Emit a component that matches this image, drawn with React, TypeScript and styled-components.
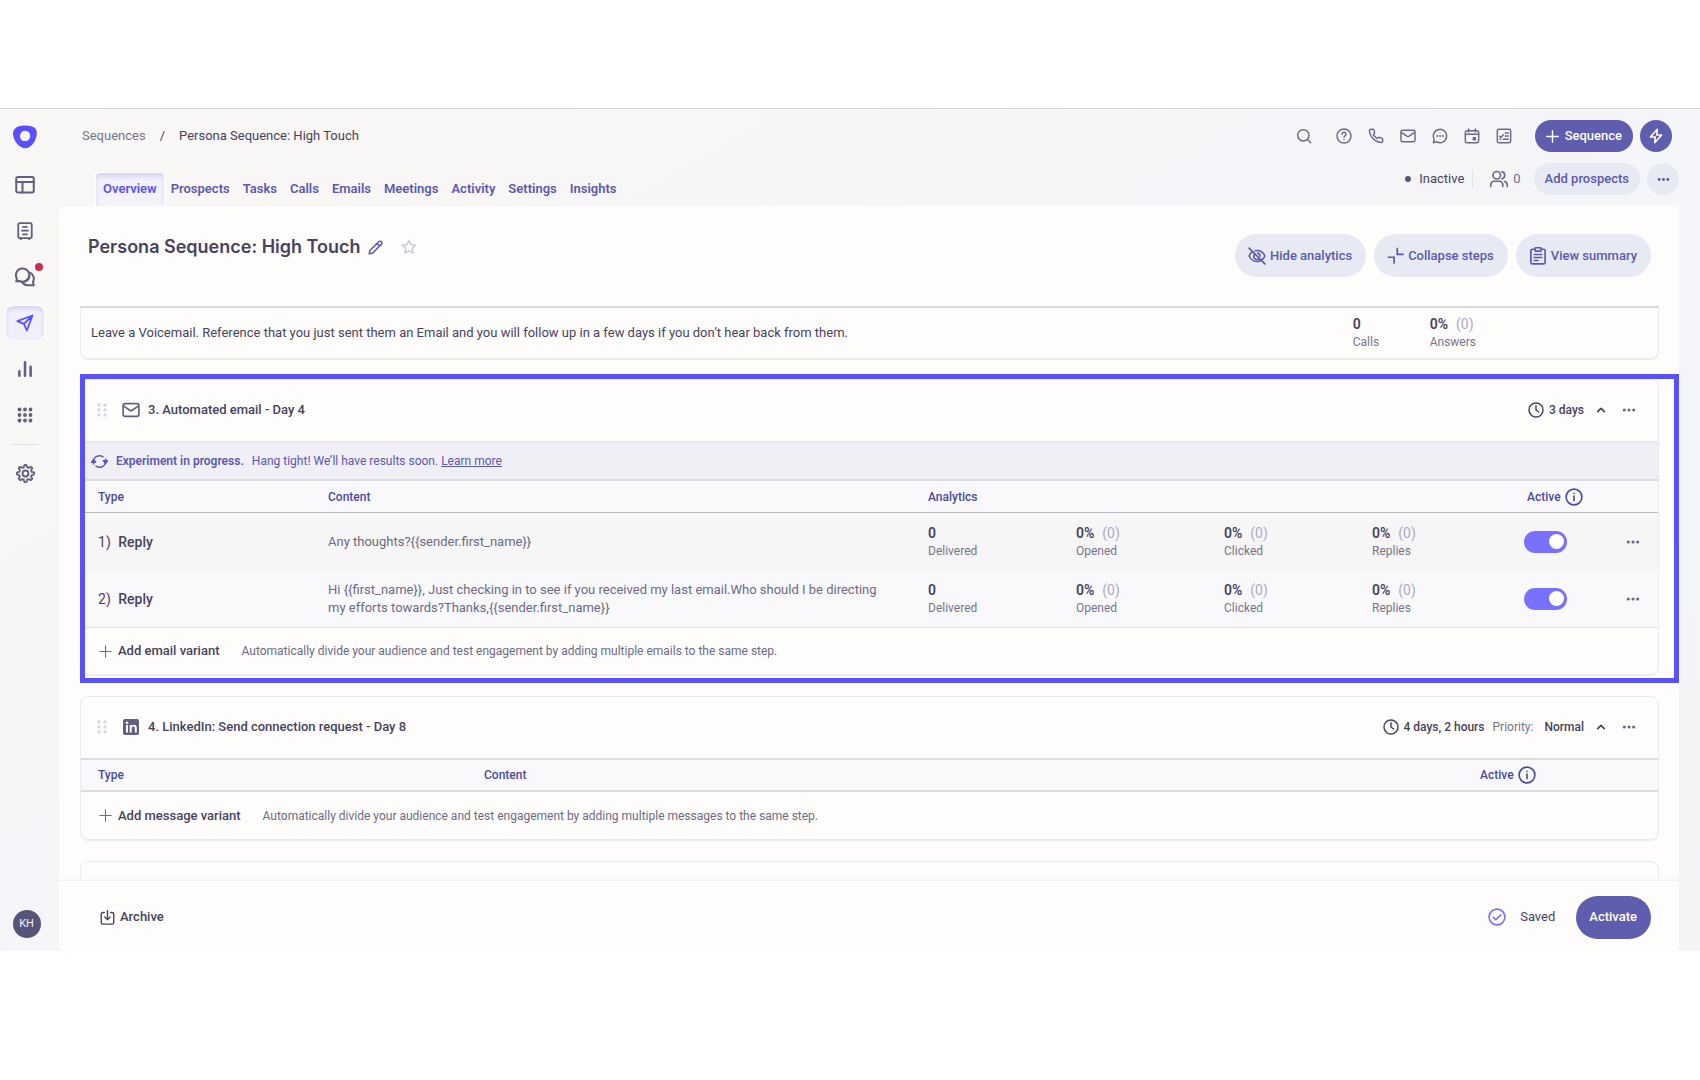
import React from 'react';
import styled, { createGlobalStyle, css } from 'styled-components';

const GlobalStyle = createGlobalStyle`
  *, *::before, *::after { box-sizing: border-box; }
  body {
    margin: 0;
    background: #fff;
    color: #47435f;
    font-family: Roboto, "Liberation Sans", sans-serif;
    font-size: 13px;
    line-height: 18px;
  }
  h1, h2, p, ul, ol { margin: 0; padding: 0; list-style: none; }
  button { font: inherit; color: inherit; border: 0; background: none; padding: 0; cursor: pointer; }
`;

/* ---------- icons ---------- */

const Svg = styled.svg.attrs({ viewBox: '0 0 24 24', 'aria-hidden': true })<{ $size?: number; $stroke?: number }>`
  display: block;
  flex: none;
  width: ${(p) => p.$size ?? 18}px;
  height: ${(p) => p.$size ?? 18}px;
  fill: none;
  stroke: currentColor;
  stroke-width: ${(p) => p.$stroke ?? 2};
  stroke-linecap: round;
  stroke-linejoin: round;
`;

/* Outline of a cog with eight rounded teeth. */
const cogPath = `M${Array.from({ length: 96 }, (_, i) => {
  const a = (i / 96) * Math.PI * 2;
  const r = 9.4 + 1.5 * Math.tanh(2 * Math.cos(8 * a));
  return `${(12 + r * Math.cos(a)).toFixed(2)} ${(12 + r * Math.sin(a)).toFixed(2)}`;
}).join('L')}Z`;

const shapes: Record<string, React.ReactNode> = {
  search: <><circle cx="11" cy="11" r="8.5" /><path d="m17.2 17.2 4.8 4.8" /></>,
  help: <><circle cx="12" cy="12" r="10.5" /><path d="M9 9.2a3 3 0 0 1 6 .3c0 2-3 2.4-3 4.3" /><path d="M12 17.2v.1" /></>,
  phone: <path d="M22 16.9v3a2 2 0 0 1-2.2 2 19.8 19.8 0 0 1-8.6-3.1 19.5 19.5 0 0 1-6-6A19.8 19.8 0 0 1 2.1 4.2 2 2 0 0 1 4.1 2h3a2 2 0 0 1 2 1.7c.1 1 .4 1.9.7 2.8a2 2 0 0 1-.5 2.1L8.1 9.9a16 16 0 0 0 6 6l1.3-1.3a2 2 0 0 1 2.1-.4c.9.3 1.8.6 2.8.7a2 2 0 0 1 1.7 2z" />,
  mail: <><rect x="1.5" y="3.5" width="21" height="17" rx="2.5" /><path d="m2 6.5 8.4 5.8a3 3 0 0 0 3.2 0L22 6.5" /></>,
  chat: <><path d="M2 22l1.3-5A10 10 0 1 1 7 20.7z" /><path d="M7.8 12h.1M12 12h.1M16.2 12h.1" strokeWidth="2.8" /></>,
  calendar: <><rect x="2" y="4" width="20" height="18" rx="2.5" /><path d="M7 1.5V6M17 1.5V6M2 9.5h20" /><path d="M14 14.5h3v3h-3z" fill="currentColor" /></>,
  checklist: <><rect x="2" y="2" width="20" height="20" rx="2.5" /><path d="m5.5 12.5 1.800 1.800 3.700-4M14 7.500h4.500M14 12h4.500M11 17h7.500M6 17h1" /></>,
  plus: <path d="M12 1.5v21M1.5 12h21" />,
  bolt: <path d="M14 2 3.5 13.5H11L10 22l10.5-11.5H13z" />,
  users: <><circle cx="9" cy="7" r="5" /><path d="M1 22v-2.500a4.500 4.500 0 0 1 4.500-4.500h7a4.500 4.500 0 0 1 4.500 4.500V22M16 2.200a5 5 0 0 1 0 9.600M23 22v-2.500a4.500 4.500 0 0 0-3.400-4.300" /></>,
  dots: <><circle cx="4" cy="12" r="2.7" fill="currentColor" /><circle cx="12" cy="12" r="2.7" fill="currentColor" /><circle cx="20" cy="12" r="2.7" fill="currentColor" /></>,
  pencil: <path d="M17 2.800a2.900 2.900 0 0 1 4.200 4.200L7.500 20.700 1.800 22.200l1.500-5.700zM14.500 5.300l4.200 4.200" />,
  star: <path d="m12 2 3 6.400 7 .9-5.200 4.800 1.400 6.900L12 17.600 5.800 21l1.400-6.900L2 9.300l7-.9z" />,
  eyeOff: <><path d="M1.500 1.500l21 21M9.500 5c6-1.200 10.700 2 13 7-1 2.200-2.300 3.800-4 5M6 6.200C4 7.600 2.500 9.600 1.500 12c2.800 6.200 8.700 8.500 14.500 6.500" /><path d="M9.200 9.600a4 4 0 1 0 5.800 5.400M13 8.200a4 4 0 0 1 3 4" /></>,
  collapse: <path d="M1 14.500h9V23.500M14.500 1v9.500H23.500" strokeLinecap="butt" strokeLinejoin="miter" />,
  clipboard: <><path d="M7.500 3H4.500A2 2 0 0 0 2.500 5v15.500a2 2 0 0 0 2 2h15a2 2 0 0 0 2-2V5a2 2 0 0 0-2-2h-3" /><rect x="8" y="1" width="8" height="4.500" rx="1" /><path d="M7 10h10M7 14h10M7 18h5" /></>,
  clock: <><circle cx="12" cy="12" r="10.500" /><path d="M12 5.500V12l4 3" /></>,
  chevronUp: <path d="m4 16 8-8 8 8" />,
  refresh: <><path d="M3.500 15.500V12.500A8.500 8.500 0 0 1 17 5.500M20.500 8.500v3A8.500 8.500 0 0 1 7 18.500" /><path d="m.8 13 2.700-4 3 4zM17.500 11l3 4 2.700-4z" fill="currentColor" /></>,
  info: <><circle cx="12" cy="12" r="10.500" /><path d="M12 10.800v6M12 7.200v.1" /></>,
  archive: <><path d="M7 4H4.500A2.500 2.500 0 0 0 2 6.500V20a2.500 2.500 0 0 0 2.500 2.500h15A2.500 2.500 0 0 0 22 20V6.500A2.500 2.500 0 0 0 19.500 4H17M12 1v14M7.500 11l4.500 4.500 4.500-4.500" /></>,
  checkCircle: <><circle cx="12" cy="12" r="10.500" /><path d="m7 12.300 3.500 3.400 6.500-6.500" /></>,
  layout: <><rect x="1.500" y="2.500" width="21" height="18.500" rx="2" /><path d="M1.500 8.500h21M9 8.500V21" /></>,
  ledger: <><rect x="3" y="1.500" width="18" height="20" rx="2" /><path d="M9.500 6.500h5M8 11.500h8M9.500 16.500h5M6.500 22v1M17.500 22v1" /></>,
  bubbles: <><path d="M1.500 17.200l.8-3.400A8 8 0 1 1 5.500 16.800z" /><path d="M18 6.800a8 8 0 0 1 3.600 11l.9 4.200H14.500a8 8 0 0 1-6.300-4.200" /><path d="M17.300 9.500c.4 4-2 7-5.300 7.600" /></>,
  send: <path d="M22 2 1.800 9.500l8.700 3.700L14.500 22zM22 2 10.500 13.200" />,
  bars: <path d="M4.500 15v6M12 3v18M19.500 9v12" strokeWidth="3.400" />,
  gear: <><circle cx="12" cy="12" r="3.700" /><path d={cogPath} /></>,
};

function Icon({ name, size, stroke }: { name: keyof typeof shapes; size?: number; stroke?: number }) {
  return <Svg $size={size} $stroke={stroke}>{shapes[name]}</Svg>;
}

const dotGrid = (cols: number[], rows: number[], r: number) =>
  rows.flatMap((y) => cols.map((x) => <circle key={`${x}-${y}`} cx={x} cy={y} r={r} />));

const DotSvg = styled.svg<{ $w: number; $h: number }>`
  display: block;
  flex: none;
  width: ${(p) => p.$w}px;
  height: ${(p) => p.$h}px;
  fill: currentColor;
`;

const Grip = () => (
  <DotSvg $w={10} $h={14} viewBox="0 0 10 14" aria-hidden>{dotGrid([2, 8], [2, 7, 12], 1.7)}</DotSvg>
);

const AppsGrid = () => (
  <DotSvg $w={16} $h={16} viewBox="0 0 16 16" aria-hidden>{dotGrid([2.5, 8, 13.5], [2.5, 8, 13.5], 1.9)}</DotSvg>
);

const Logo = () => (
  <DotSvg $w={24} $h={24} viewBox="0 0 24 24" aria-hidden>
    <path
      fillRule="evenodd"
      d="M0 8.500C0 4 3.500 1.200 9 .7c5-.5 9.500 0 12.500 2C24 4.700 24.300 8.500 23.300 12c-1.500 5.500-5.300 10.500-10.300 11.300C7.500 24 0 16.500 0 8.500zm7 2.100c-.3 3 1.800 5.300 4.600 5.500 3 .2 5.500-2.300 5.600-5.200.1-3-2-5-4.900-5.100C9.500 5.700 7.300 7.800 7 10.600z"
    />
  </DotSvg>
);

const LinkedIn = () => (
  <DotSvg $w={18} $h={18} viewBox="0 0 18 18" aria-hidden>
    <rect x="1" y="1" width="16" height="16" rx="2" />
    <g fill="#fefdfc">
      <circle cx="5" cy="4.800" r="1.300" />
      <rect x="4" y="7" width="2" height="7.500" />
      <path d="M7.700 7h1.900v1c.5-.8 1.300-1.200 2.300-1.200 2 0 2.900 1.200 2.900 3.300v4.400h-2v-4c0-1.200-.5-1.900-1.500-1.900s-1.600.8-1.600 2v3.900h-2z" />
    </g>
  </DotSvg>
);

/* ---------- shell ---------- */

const Page = styled.div`
  height: 100vh;
  min-height: 720px;
  padding: 108px 0 129px;
`;

const Shell = styled.div`
  display: grid;
  grid-template-columns: 59px minmax(0, 1fr);
  height: 100%;
  border-top: 1px solid #d8d7db;
  background: linear-gradient(150deg, #f9f8f6 0%, #f8f7f6 20%, #f6f4f8 42%, #f5f6f9 55%, #f4f4f7 100%);
`;

const Sidebar = styled.nav`
  display: flex;
  flex-direction: column;
  align-items: center;
  padding: 16px 9px 13px 0;
  color: #625f7f;
`;

const LogoLink = styled.a`
  display: block;
  color: #5951ff;
  margin-bottom: 13px;
`;

const SideLink = styled.a<{ $active?: boolean }>`
  position: relative;
  display: flex;
  align-items: center;
  justify-content: center;
  width: 40px;
  height: 36px;
  margin: 5px 0;
  border-radius: 8px;
  color: inherit;
  ${(p) =>
    p.$active &&
    css`
      color: #5951ff;
      background: #f0effc;
      border: 1px solid #fff;
      box-shadow: inset 0 3px 4px #d6d4ee;
    `}
`;

const Badge = styled.span`
  position: absolute;
  top: 4px;
  right: 2px;
  width: 8px;
  height: 8px;
  border-radius: 50%;
  background: #cb2c4d;
`;

const SideRule = styled.hr`
  width: 28px;
  margin: 6px 0 5px;
  border: 0;
  border-top: 1px solid #e3e2e8;
`;

const Avatar = styled.button`
  width: 28px;
  height: 28px;
  margin: auto 0 0 3px;
  border-radius: 50%;
  background: #57547a;
  color: #f3f2f8;
  font-size: 11px;
`;

const Main = styled.main`
  display: flex;
  flex-direction: column;
  min-width: 0;
  min-height: 0;
  padding-right: 21px;
`;

const Header = styled.header`
  display: grid;
  grid-template-columns: minmax(0, 1fr) auto;
  height: 97px;
  flex: none;
`;

const HeaderLeft = styled.div`
  display: flex;
  flex-direction: column;
  justify-content: space-between;
  padding: 18px 0 0 23px;
`;

const HeaderRight = styled.div`
  display: flex;
  flex-direction: column;
  gap: 11px;
  padding-top: 11px;
`;

const Crumbs = styled.ol`
  display: flex;
  gap: 14px;
  color: #47435f;
`;

const CrumbLink = styled.a`
  color: #77748d;
  text-decoration: none;
`;

const Tabs = styled.nav`
  display: flex;
  padding-left: 13px;
`;

const Tab = styled.a<{ $active?: boolean }>`
  padding: 8px 7px 8px 6px;
  height: 34px;
  font-weight: 600;
  color: #5b59b0;
  text-decoration: none;
  ${(p) =>
    p.$active &&
    css`
      padding: 7px;
      color: #5951ff;
      background: #f3f2fd;
      border: 1px solid #fff;
      border-bottom: 0;
      border-radius: 4px 4px 0 0;
      box-shadow: inset 0 4px 4px #d9d7f0;
    `}
`;

const ToolRow = styled.div<{ $inset?: boolean }>`
  display: flex;
  align-items: center;
  justify-content: flex-end;
  gap: 7px;
  padding-right: ${(p) => (p.$inset ? 7 : 0)}px;
`;

const Tools = styled.div`
  display: flex;
  align-items: center;
  gap: 16px;
  margin-right: 16px;
  color: #6d6a86;
  & > :first-child { margin-right: 8px; }
`;

const IconButton = styled.button<{ $muted?: boolean }>`
  display: flex;
  align-items: center;
  justify-content: center;
  color: ${(p) => (p.$muted ? '#6d6a86' : 'inherit')};
`;

const Pill = styled.button<{ $solid?: boolean; $large?: boolean }>`
  display: flex;
  align-items: center;
  justify-content: center;
  gap: 6px;
  height: ${(p) => (p.$large ? 43 : 32)}px;
  padding: ${(p) => (p.$large ? '0 14px 0 13px' : '0 11px')};
  border-radius: 22px;
  font-weight: 500;
  white-space: nowrap;
  color: ${(p) => (p.$solid ? '#fff' : '#5b59b0')};
  background: ${(p) => (p.$solid ? '#5e5dae' : '#e7eaf3')};
`;

const RoundButton = styled(Pill)`
  width: 32px;
  padding: 0;
`;

const Status = styled.span`
  display: flex;
  align-items: center;
  gap: 8px;
  padding-right: 8px;
  border-right: 1px solid #e3e2e8;
  &::before {
    content: "";
    width: 6px;
    height: 6px;
    border-radius: 50%;
    background: #57547a;
  }
`;

const PeopleCount = styled.span`
  display: flex;
  align-items: center;
  gap: 5px;
  margin: 0 6px 0 10px;
  color: #6d6a86;
`;

/* ---------- panel ---------- */

const Panel = styled.section`
  display: flex;
  flex-direction: column;
  flex: 1;
  min-height: 0;
  border-radius: 6px;
  background: #fefdfc;
`;

const TitleBar = styled.div`
  display: flex;
  justify-content: space-between;
  align-items: flex-start;
  flex: none;
  height: 100px;
  padding: 28px 28px 0 29px;
`;

const TitleGroup = styled.div`
  display: flex;
  align-items: center;
  height: 26px;
  gap: 7px;
`;

const Title = styled.h1`
  font: 600 18px/24px Inter, Roboto, sans-serif;
  color: #47435f;
`;

const EditButton = styled(IconButton)`
  color: #5b59b0;
`;

const StarButton = styled(IconButton)`
  margin-left: 11px;
  color: #cfcee0;
`;

const Actions = styled.div`
  display: flex;
  gap: 8px;
  & > button { gap: 4px; }
`;

const Steps = styled.div`
  flex: 1;
  min-height: 0;
  overflow: hidden auto;
  scrollbar-width: none;
  padding: 0 20px 0 21px;
`;

const Card = styled.article`
  border: 1px solid #ebeaef;
  border-radius: 8px;
  box-shadow: 0 1px 1px #ecebef;
  margin-bottom: 21px;
  overflow: hidden;
`;

const NoteCard = styled(Card)`
  display: flex;
  justify-content: space-between;
  align-items: center;
  height: 53px;
  padding: 0 182px 0 10px;
  border-top: 2px solid #d9d8dc;
  border-radius: 0 0 8px 8px;
  margin-bottom: 20px;
`;

const StatList = styled.div`
  display: flex;
`;

const StatBox = styled.div<{ $w?: number }>`
  width: ${(p) => (p.$w ? `${p.$w}px` : 'auto')};
`;

const StatValue = styled.div`
  font-size: 14px;
  font-weight: 600;
  & > span {
    margin-left: 8px;
    font-weight: 400;
    color: #aeabc6;
  }
`;

const StatLabel = styled.div`
  font-size: 12px;
  color: #77748d;
`;

const Highlighted = styled.div`
  position: relative;
  &::after {
    content: "";
    position: absolute;
    inset: -5px -20px -8px 0;
    border: 5px solid #5951ff;
    pointer-events: none;
  }
`;

const StepHead = styled.header`
  display: flex;
  align-items: center;
  height: 61px;
  padding: 0 22px 1px 16px;
`;

const GripHandle = styled.button`
  color: #d8d7e5;
  margin-right: 15px;
`;

const StepIcon = styled.span`
  color: #625f7f;
  margin-right: 8px;
`;

const StepTitle = styled.h2`
  flex: 1;
  font-size: 13px;
  font-weight: 500;
  line-height: 18px;
`;

const StepMeta = styled.div`
  display: flex;
  align-items: center;
  font-size: 12px;
  font-weight: 500;
`;

const Delay = styled.span`
  display: flex;
  align-items: center;
  gap: 5px;
`;

const Priority = styled.span`
  margin-left: 8px;
  & > span {
    margin-right: 11px;
    font-weight: 400;
    color: #77748d;
  }
`;

const ToggleStep = styled(IconButton)`
  width: 16px;
  margin: 0 13px 0 9px;
`;

const Banner = styled.div`
  display: flex;
  align-items: center;
  gap: 8px;
  height: 38px;
  padding: 0 10px;
  border-top: 2px solid #e9e8ec;
  background: #f0eff6;
  color: #5b59b0;
  font-size: 12px;
  & > strong { font-weight: 600; }
`;

const BannerLink = styled.a`
  color: inherit;
`;

const VariantTable = styled.table`
  width: 100%;
  table-layout: fixed;
  border-spacing: 0;
  text-align: left;
`;

const Col = styled.col<{ $w?: number }>`
  width: ${(p) => (p.$w ? `${p.$w}px` : 'auto')};
`;

const Th = styled.th<{ $first?: boolean; $rule?: string }>`
  height: 34px;
  padding: 0 0 0 ${(p) => (p.$first ? 17 : 0)}px;
  border-top: 2px solid #dddcdf;
  border-bottom: ${(p) => p.$rule ?? '2px solid #dddcdf'};
  background: #f9f9fc;
  color: #4c4a9c;
  font-size: 12px;
  font-weight: 500;
`;

const ActiveLabel = styled.span`
  display: flex;
  align-items: center;
  gap: 4px;
  padding-left: 7px;
`;

const Row = styled.tr<{ $shade?: boolean }>`
  background: ${(p) => (p.$shade ? '#f6f6f6' : '#f9f9fc')};
`;

const Td = styled.td`
  height: 57px;
  padding: 0;
`;

const TypeCell = styled(Td)`
  padding-left: 17px;
  font-size: 14px;
  & > strong {
    margin-left: 4px;
    font-weight: 500;
  }
`;

const ContentCell = styled(Td)`
  padding-right: 32px;
  color: #6d6a86;
`;

const SwitchCell = styled(Td)`
  padding-left: 4px;
`;

const Switch = styled.input.attrs({ type: 'checkbox', role: 'switch' })`
  appearance: none;
  display: flex;
  align-items: center;
  width: 43px;
  height: 22px;
  margin: 0;
  padding: 3px;
  border-radius: 11px;
  background: #c9c8d8;
  cursor: pointer;
  &::before {
    content: "";
    width: 15px;
    height: 15px;
    border-radius: 50%;
    background: #fff;
  }
  &:checked {
    justify-content: flex-end;
    background: #7871ff;
  }
`;

const RowMenu = styled(IconButton)`
  margin-left: 16px;
`;

const StepFoot = styled.footer<{ $rule?: boolean }>`
  display: flex;
  align-items: center;
  gap: 22px;
  height: 47px;
  padding-left: 18px;
  border-top: ${(p) => (p.$rule ? '1px solid #e3e2e6' : '0')};
  color: #6d6a86;
  font-size: 12px;
`;

const AddButton = styled.button`
  display: flex;
  align-items: center;
  gap: 6px;
  font-size: 13px;
  font-weight: 500;
  & > span { color: #47435f; }
`;

const BottomBar = styled.footer`
  display: flex;
  align-items: center;
  flex: none;
  height: 71px;
  padding: 2px 28px 0 41px;
  border-top: 1px solid #f3f2f3;
  box-shadow: 0 -2px 3px #f8f7f7;
`;

const ArchiveButton = styled.button`
  display: flex;
  align-items: center;
  gap: 5px;
  margin-right: auto;
  font-weight: 500;
`;

const Saved = styled.span`
  display: flex;
  align-items: center;
  gap: 14px;
  margin-right: 21px;
  & > svg { color: #7871ff; }
`;

/* ---------- data ---------- */

const tabs = ['Overview', 'Prospects', 'Tasks', 'Calls', 'Emails', 'Meetings', 'Activity', 'Settings', 'Insights'];

const tools: [string, string][] = [
  ['search', 'Search'], ['help', 'Help'], ['phone', 'Call'], ['mail', 'Email'],
  ['chat', 'Messages'], ['calendar', 'Calendar'], ['checklist', 'Tasks'],
];

const variants = [
  'Any thoughts?{{sender.first_name}}',
  'Hi {{first_name}}, Just checking in to see if you received my last email.Who should I be directing my efforts towards?Thanks,{{sender.first_name}}',
];

const metrics: [string, string, string?][] = [
  ['Delivered', '0'], ['Opened', '0%', '(0)'], ['Clicked', '0%', '(0)'], ['Replies', '0%', '(0)'],
];

function Stat({ label, value, count, width }: { label: string; value: string; count?: string; width?: number }) {
  return (
    <StatBox $w={width}>
      <StatValue>{value}{count && <span>{count}</span>}</StatValue>
      <StatLabel>{label}</StatLabel>
    </StatBox>
  );
}

function StepHeader({ icon, title, delay, priority }: { icon: React.ReactNode; title: string; delay: string; priority?: string }) {
  return (
    <StepHead>
      <GripHandle aria-label="Reorder step"><Grip /></GripHandle>
      <StepIcon>{icon}</StepIcon>
      <StepTitle>{title}</StepTitle>
      <StepMeta>
        <Delay><Icon name="clock" size={16} stroke={2.2} />{delay}</Delay>
        {priority && <Priority><span>Priority:</span>{priority}</Priority>}
        <ToggleStep aria-label="Collapse step"><Icon name="chevronUp" size={10} stroke={4} /></ToggleStep>
        <IconButton $muted aria-label="Step options"><Icon name="dots" size={14} stroke={0} /></IconButton>
      </StepMeta>
    </StepHead>
  );
}

const ActiveHeading = () => (
  <ActiveLabel>Active <Icon name="info" size={18} stroke={2.2} /></ActiveLabel>
);

const rail: [string, string][] = [['layout', 'Home'], ['ledger', 'Accounts'], ['bubbles', 'Inbox'], ['send', 'Sequences'], ['bars', 'Reports']];

export default function App() {
  return (
    <Page>
      <GlobalStyle />
      <Shell>
        <Sidebar aria-label="Main">
          <LogoLink href="#" aria-label="Home"><Logo /></LogoLink>
          {rail.map(([icon, label]) => (
            <SideLink key={icon} href="#" aria-label={label} $active={icon === 'send'}>
              <Icon name={icon} size={icon === 'layout' || icon === 'bubbles' ? 20 : 18} stroke={2.4} />
              {icon === 'bubbles' && <Badge />}
            </SideLink>
          ))}
          <SideLink href="#" aria-label="Apps"><AppsGrid /></SideLink>
          <SideRule />
          <SideLink href="#" aria-label="Settings"><Icon name="gear" size={19} stroke={2.4} /></SideLink>
          <Avatar aria-label="Account">KH</Avatar>
        </Sidebar>

        <Main>
          <Header>
            <HeaderLeft>
              <Crumbs>
                <li><CrumbLink href="#">Sequences</CrumbLink></li>
                <li>/</li>
                <li>Persona Sequence: High Touch</li>
              </Crumbs>
              <Tabs aria-label="Sequence">
                {tabs.map((t, i) => <Tab key={t} href="#" $active={i === 0}>{t}</Tab>)}
              </Tabs>
            </HeaderLeft>
            <HeaderRight>
              <ToolRow $inset>
                <Tools>
                  {tools.map(([icon, label]) => (
                    <IconButton key={icon} aria-label={label}><Icon name={icon} size={16} stroke={2.2} /></IconButton>
                  ))}
                </Tools>
                <Pill $solid><Icon name="plus" size={13} stroke={2.6} />Sequence</Pill>
                <RoundButton $solid aria-label="Quick actions"><Icon name="bolt" size={16} stroke={2.4} /></RoundButton>
              </ToolRow>
              <ToolRow>
                <Status>Inactive</Status>
                <PeopleCount><Icon name="users" size={18} stroke={2.2} />0</PeopleCount>
                <Pill>Add prospects</Pill>
                <RoundButton aria-label="More"><Icon name="dots" size={13} stroke={0} /></RoundButton>
              </ToolRow>
            </HeaderRight>
          </Header>

          <Panel>
            <TitleBar>
              <TitleGroup>
                <Title>Persona Sequence: High Touch</Title>
                <EditButton aria-label="Rename"><Icon name="pencil" size={15} stroke={2.4} /></EditButton>
                <StarButton aria-label="Favourite"><Icon name="star" size={16} stroke={2.4} /></StarButton>
              </TitleGroup>
              <Actions>
                <Pill $large><Icon name="eyeOff" stroke={2.2} />Hide analytics</Pill>
                <Pill $large><Icon name="collapse" size={17} stroke={2.4} />Collapse steps</Pill>
                <Pill $large><Icon name="clipboard" stroke={2.2} />View summary</Pill>
              </Actions>
            </TitleBar>

            <Steps>
              <NoteCard>
                <p>Leave a Voicemail. Reference that you just sent them an Email and you will follow up in a few days if you don’t hear back from them.</p>
                <StatList>
                  <Stat label="Calls" value="0" width={77} />
                  <Stat label="Answers" value="0%" count="(0)" />
                </StatList>
              </NoteCard>

              <Highlighted>
                <Card>
                  <StepHeader icon={<Icon name="mail" stroke={2.2} />} title="3. Automated email - Day 4" delay="3 days" />
                  <Banner>
                    <Icon name="refresh" size={17} />
                    <strong>Experiment in progress.</strong>
                    <span>Hang tight! We’ll have results soon. <BannerLink href="#">Learn more</BannerLink></span>
                  </Banner>
                  <VariantTable>
                    <colgroup>
                      <Col $w={247} /><Col /><Col $w={148} /><Col $w={148} /><Col $w={148} /><Col $w={148} /><Col $w={90} /><Col $w={48} />
                    </colgroup>
                    <thead>
                      <tr>
                        <Th $first $rule="1px solid #bcbbc0">Type</Th>
                        <Th $rule="1px solid #bcbbc0">Content</Th>
                        <Th $rule="1px solid #bcbbc0" colSpan={4}>Analytics</Th>
                        <Th $rule="1px solid #bcbbc0" colSpan={2}><ActiveHeading /></Th>
                      </tr>
                    </thead>
                    <tbody>
                      {variants.map((text, i) => (
                        <Row key={i} $shade={i === 0}>
                          <TypeCell>{i + 1}) <strong>Reply</strong></TypeCell>
                          <ContentCell>{text}</ContentCell>
                          {metrics.map(([label, value, count]) => (
                            <Td key={label}><Stat label={label} value={value} count={count} /></Td>
                          ))}
                          <SwitchCell><Switch defaultChecked aria-label={`Variant ${i + 1} active`} /></SwitchCell>
                          <Td><RowMenu $muted aria-label="Variant options"><Icon name="dots" size={14} stroke={0} /></RowMenu></Td>
                        </Row>
                      ))}
                    </tbody>
                  </VariantTable>
                  <StepFoot $rule>
                    <AddButton><Icon name="plus" size={13} />
                      <span>Add email variant</span></AddButton>
                    <p>Automatically divide your audience and test engagement by adding multiple emails to the same step.</p>
                  </StepFoot>
                </Card>
              </Highlighted>

              <Card>
                <StepHeader icon={<LinkedIn />} title="4. LinkedIn: Send connection request - Day 8" delay="4 days, 2 hours" priority="Normal" />
                <VariantTable>
                  <colgroup><Col $w={403} /><Col /><Col $w={185} /></colgroup>
                  <thead>
                    <tr>
                      <Th $first>Type</Th>
                      <Th>Content</Th>
                      <Th><ActiveHeading /></Th>
                    </tr>
                  </thead>
                </VariantTable>
                <StepFoot>
                  <AddButton><Icon name="plus" size={13} />
                    <span>Add message variant</span></AddButton>
                  <p>Automatically divide your audience and test engagement by adding multiple messages to the same step.</p>
                </StepFoot>
              </Card>

              <Card><StepHead /></Card>
            </Steps>

            <BottomBar>
              <ArchiveButton><Icon name="archive" size={15} stroke={2.2} />Archive</ArchiveButton>
              <Saved><Icon name="checkCircle" stroke={2.2} />Saved</Saved>
              <Pill $solid $large>Activate</Pill>
            </BottomBar>
          </Panel>
        </Main>
      </Shell>
    </Page>
  );
}
